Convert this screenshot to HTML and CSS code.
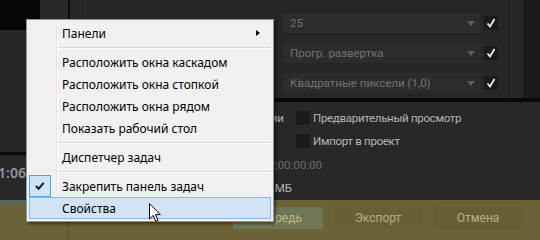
FILE: index.html
```html
<!DOCTYPE html>
<html lang="ru">
<head>
<meta charset="utf-8">
<title>Меню панели задач</title>
<link rel="stylesheet" href="styles.css">
</head>
<body>
<div class="app">
  <div class="left">
    <div class="lt">
      <div class="lt-black"></div>
      <div class="lt-a"></div>
      <div class="lt-line"></div>
      <div class="lt-b"></div>
      <div class="lt-edge"></div>
      <div class="lt-rest"></div>
    </div>
    <div class="lm"></div>
    <div class="lsep"></div>
    <div class="ltime"><div class="tc"><span>00:00:01:06</span></div></div>
    <div class="lstrip"></div>
    <div class="lolive"><div class="lolive-a"></div><div class="lolive-line"></div></div>
  </div>
  <div class="right">
    <div class="rtop">
      <div class="rmain">
        <div class="row">
          <div class="dd"><span>25</span><span class="dd-arrow"></span></div>
          <div class="chk"><svg viewBox="0 0 14 14" width="14" height="14"><path d="M3.5 7.5 L6 10.5 L10.5 3" fill="none" stroke="#f0f0f0" stroke-width="1.8"/></svg></div>
        </div>
        <div class="row">
          <div class="dd"><span>Прогр. развертка</span><span class="dd-arrow"></span></div>
          <div class="chk"><svg viewBox="0 0 14 14" width="14" height="14"><path d="M3.5 7.5 L6 10.5 L10.5 3" fill="none" stroke="#f0f0f0" stroke-width="1.8"/></svg></div>
        </div>
        <div class="row">
          <div class="dd"><span>Квадратные пиксели (1,0)</span><span class="dd-arrow"></span></div>
          <div class="chk"><svg viewBox="0 0 14 14" width="14" height="14"><path d="M3.5 7.5 L6 10.5 L10.5 3" fill="none" stroke="#f0f0f0" stroke-width="1.8"/></svg></div>
        </div>
      </div>
      <div class="rline"></div>
      <div class="rgray"></div>
      <div class="rdark"></div>
    </div>
    <div class="rband"></div>
    <div class="rlow">
      <div class="lrow">
        <div class="lbox lbox-1"><span>Максимальное качество визуализации</span></div>
        <div class="dchk"></div>
        <span class="ltext">Предварительный просмотр</span>
      </div>
      <div class="lrow">
        <div class="lbox lbox-1"></div>
        <div class="dchk"></div>
        <span class="ltext">Импорт в проект</span>
      </div>
      <div class="lrow">
        <div class="lbox lbox-3 dim"><span>Задать начальный таймкод 00:00:00:00</span></div>
      </div>
      <div class="lrow">
        <div class="lbox lbox-4"><span>Предполагаемый размер файла: 34 МБ</span></div>
      </div>
    </div>
    <div class="rbtns">
      <div class="btn btn-queue">Очередь</div>
      <div class="btn btn-export">Экспорт</div>
      <div class="btn btn-cancel">Отмена</div>
    </div>
  </div>
</div>

<div class="menu">
  <div class="mi">Панели<span class="sub-arrow"></span></div>
  <div class="msep"></div>
  <div class="mi">Расположить окна каскадом</div>
  <div class="mi">Расположить окна стопкой</div>
  <div class="mi">Расположить окна рядом</div>
  <div class="mi">Показать рабочий стол</div>
  <div class="msep"></div>
  <div class="mi">Диспетчер задач</div>
  <div class="msep"></div>
  <div class="mi mi-checked"><span class="mcheck"><svg viewBox="0 0 22 22" width="20" height="20"><path d="M6.5 11 L9.5 14 L15 7.5" fill="none" stroke="#1a1a1a" stroke-width="2.2"/></svg></span>Закрепить панель задач</div>
  <div class="mi mi-hover">Свойства</div>
</div>

<svg class="cursor" viewBox="0 0 12 19" width="12" height="19">
  <path d="M0.5 0.5 L0.5 16 L4.2 12.4 L6.8 18.3 L9 17.3 L6.5 11.6 L11.3 11.6 Z" fill="#fff" stroke="#000" stroke-width="1" stroke-linejoin="miter"/>
</svg>
</body>
</html>
```

FILE: styles.css
```css
* { box-sizing: border-box; margin: 0; padding: 0; }
html, body { width: 540px; height: 240px; overflow: hidden; }
body {
  background: #262626;
  font-family: "Noto Sans", "Open Sans", "DejaVu Sans", sans-serif;
  position: relative;
}

.app { display: grid; grid-template-columns: 270px 270px; height: 240px; }

/* left side */
.left { display: flex; flex-direction: column; height: 240px; }
.lt { display: flex; height: 30px; }
.lt-black { width: 40px; background: #050505; }
.lt-a { width: 28px; background: #282828; }
.lt-line { width: 2px; background: #0c0c0c; }
.lt-b { width: 15px; background: #262626; }
.lt-edge { width: 1px; background: #2e2e2e; }
.lt-rest { flex: 1; background: #262626; }
.lm { height: 122px; background: #262626; }
.lsep { height: 3px; background: #080808; }
.ltime { height: 45px; background: #282828; display: flex; align-items: center; padding-bottom: 10px; }
.tc {
  width: 26px; display: flex; justify-content: flex-end; overflow: hidden;
  white-space: nowrap; color: #9097a0; font-size: 14px; font-weight: 600;
}
.lstrip { height: 5px; background: #5b695a; }
.lolive { flex: 1; background: #6b6337; display: flex; }
.lolive-a { width: 66px; }
.lolive-line { width: 3px; background: #615930; }

/* right side */
.right {
  display: flex; flex-direction: column; height: 240px;
  font-family: Roboto, "Noto Sans", sans-serif;
}
.rtop { height: 98px; display: flex; }
.rmain { width: 238px; padding: 13px 0 0 13px; display: flex; flex-direction: column; gap: 10px; background: #262626; }
.rline { width: 1px; background: #1c1c1c; }
.rgray { width: 14px; background: #262626; }
.rdark { flex: 1; background: #1b1b1b; }
.row { display: flex; align-items: center; height: 20px; }
.dd {
  width: 197px; height: 20px; background: #2c2c2c; display: flex; align-items: center;
  justify-content: space-between; padding: 0 5px 0 7px; color: #737373; font-size: 11.5px; white-space: nowrap;
}
.dd-arrow {
  width: 0; height: 0; border-left: 4px solid transparent; border-right: 4px solid transparent;
  border-top: 5px solid #5e5e5e;
}
.chk { width: 14px; height: 14px; margin-left: 4px; background: #1a1a1a; display: flex; }

.rband { height: 4px; background: #080808; }
.rlow { height: 98px; background: #282828; padding-top: 4px; display: flex; flex-direction: column; font-size: 11.5px; color: #b6b6b6; }
.lrow { display: flex; align-items: center; height: 23.5px; white-space: nowrap; }
.lbox { display: flex; justify-content: flex-end; overflow: hidden; flex: none; }
.lbox-1 { width: 14px; margin-right: 12px; }
.lbox-3 { width: 52px; }
.lbox-4 { width: 22px; }
.dim { color: #6c6c6c; }
.dchk { width: 14px; height: 14px; background: #1b1b1b; margin-right: 3px; flex: none; }
.ltext { color: #b6b6b6; letter-spacing: -0.3px; }

.rbtns {
  flex: 1; background: #6b6337; display: flex; justify-content: flex-end; gap: 10px;
  padding: 7px 17px 0 0;
}
.btn {
  flex: none; width: 90px; height: 22px; display: flex; align-items: center; justify-content: center;
  font-size: 12px; color: #b4ae86;
}
.btn-queue { background: #6f7856; color: #bcb68f; }
.btn-export { background: #686035; }
.btn-cancel { background: #675f34; }

/* context menu */
.menu {
  position: absolute; left: 26px; top: 19px; width: 248px;
  background: #f0f0f0; border: 1px solid #979797; padding: 2px;
  box-shadow: 2px 2px 3px rgba(0, 0, 0, 0.45);
  font-size: 12px; color: #000;
}
.menu::before {
  content: ""; position: absolute; left: 29px; top: 0; bottom: 0; width: 1px;
  background: #e2e3e3; box-shadow: 1px 0 0 #ffffff;
}
.mi {
  position: relative; height: 22px; line-height: 22px; padding-left: 32px;
  white-space: nowrap; border: 1px solid transparent;
}
.msep { height: 7px; margin-left: 29px; position: relative; }
.msep::after {
  content: ""; position: absolute; left: 0; right: 0; top: 3px; height: 1px;
  background: #d7d7d7; box-shadow: 0 1px 0 #ffffff;
}
.sub-arrow {
  position: absolute; left: 226px; top: 7px; width: 0; height: 0;
  border-top: 3.5px solid transparent; border-bottom: 3.5px solid transparent; border-left: 4px solid #000;
}
.mcheck {
  position: absolute; left: -1px; top: -1px; width: 22px; height: 22px;
  background: #cce4f7; border: 1px solid #4ea2e4; display: flex; align-items: center; justify-content: center;
}
.mi-hover { background: #d1e3f5; border-color: #84b9ea; }

.cursor { position: absolute; left: 149px; top: 203px; }
```
